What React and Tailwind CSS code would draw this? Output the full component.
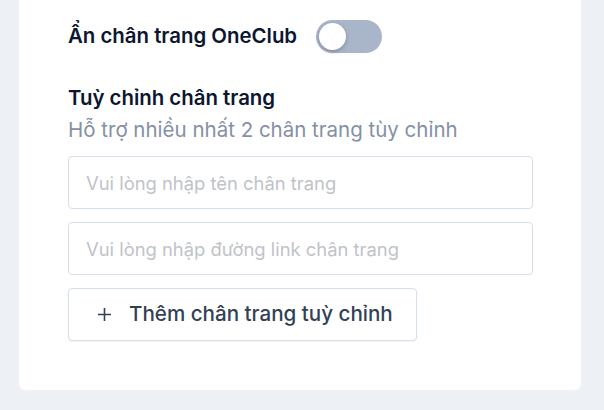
import { useState } from "react";

const font = { fontFamily: '"Inter", "Noto Sans", sans-serif' };

const Toggle = ({ on, onChange }) => (
  <button
    type="button"
    onClick={() => onChange(!on)}
    className={`relative w-[66px] h-[33px] rounded-full transition ${on ? "bg-[#3b82f6]" : "bg-[#a9b5c8]"}`}
  >
    <span
      className={`absolute top-[3px] w-[27px] h-[27px] rounded-full bg-white shadow-[0_2px_4px_rgba(15,23,42,0.25)] transition-all ${on ? "left-[36px]" : "left-[3px]"}`}
    />
  </button>
);

const App = () => {
  const [hidden, setHidden] = useState(false);
  const [name, setName] = useState("");
  const [link, setLink] = useState("");

  return (
    <div className="min-h-screen bg-[#edf1f6] pl-[19px] pb-[20px]" style={font}>
      <div className="w-[562px] bg-white rounded-b-md pl-[49px] pt-[20px] pb-[49px]">
        {/* ── Hide footer ── */}
        <div className="flex items-center gap-[19px] h-[33px]">
          <span className="text-[20.4px] font-semibold text-[#0c1631] whitespace-nowrap">Ẩn chân trang OneClub</span>
          <Toggle on={hidden} onChange={setHidden} />
        </div>

        {/* ── Custom footer ── */}
        <h3 className="mt-[29px] text-[20.4px] leading-[32px] font-semibold text-[#0c1631]">
          Tuỳ chỉnh chân trang
        </h3>
        <p className="text-[20.5px] leading-[32px] text-[#8590a6] whitespace-nowrap">
          Hỗ trợ nhiều nhất 2 chân trang tùy chỉnh
        </p>

        <div className="mt-[10px] w-[465px] flex flex-col gap-[13px]">
          <input
            value={name}
            onChange={(e) => setName(e.target.value)}
            placeholder="Vui lòng nhập tên chân trang"
            className="h-[53px] w-full rounded-[4px] border border-[#d6e0ec] px-[17px] text-[18.4px] text-[#0f172a] placeholder-[#bfc3c9] outline-none focus:border-[#93b4e0]"
          />
          <input
            value={link}
            onChange={(e) => setLink(e.target.value)}
            placeholder="Vui lòng nhập đường link chân trang"
            className="h-[53px] w-full rounded-[4px] border border-[#d6e0ec] px-[17px] text-[18.4px] text-[#0f172a] placeholder-[#bfc3c9] outline-none focus:border-[#93b4e0]"
          />
          <button
            type="button"
            className="self-start h-[53px] w-[349px] flex items-center pl-[28px] gap-[17px] rounded-[4px] border border-[#d6e0ec] bg-white shadow-[0_1px_2px_rgba(15,23,42,0.05)] text-[20.6px] font-medium text-[#334155]"
          >
            <svg width="15" height="15" viewBox="0 0 15 15" fill="none" stroke="currentColor" strokeWidth="1.6">
              <path d="M7.5 1v13M1 7.5h13" />
            </svg>
            <span className="whitespace-nowrap">Thêm chân trang tuỳ chỉnh</span>
          </button>
        </div>
      </div>
    </div>
  );
};

export default App;
